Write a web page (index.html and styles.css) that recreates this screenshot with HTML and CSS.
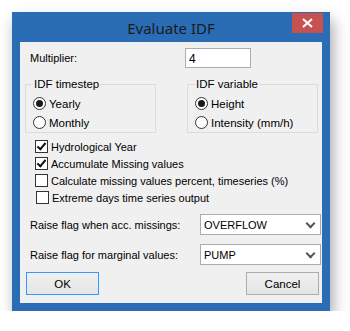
FILE: index.html
```html
<!DOCTYPE html>
<html lang="en">
<head>
    <meta charset="UTF-8">
    <title>Evaluate IDF</title>
    <link rel="stylesheet" href="styles.css">
</head>
<body>
    <div class="window">
        <div class="titlebar">
            <span class="title">Evaluate IDF</span>
            <span class="close">
                <svg width="11" height="10" viewBox="0 0 11 10"><path d="M1 1 L10 9 M10 1 L1 9" stroke="#fff" stroke-width="2"/></svg>
            </span>
        </div>
        <div class="client">
            <div class="row-mult">
                <span class="label-mult">Multiplier:</span>
                <div class="textbox">4</div>
            </div>

            <div class="groups">
                <fieldset class="group">
                    <legend>IDF timestep</legend>
                    <div class="radio-row"><span class="radio on"></span>Yearly</div>
                    <div class="radio-row"><span class="radio"></span>Monthly</div>
                </fieldset>
                <fieldset class="group">
                    <legend>IDF variable</legend>
                    <div class="radio-row"><span class="radio on"></span>Height</div>
                    <div class="radio-row"><span class="radio"></span>Intensity (mm/h)</div>
                </fieldset>
            </div>

            <div class="checks">
                <div class="check-row"><span class="check on"></span>Hydrological Year</div>
                <div class="check-row"><span class="check on"></span>Accumulate Missing values</div>
                <div class="check-row"><span class="check"></span>Calculate missing values percent, timeseries (%)</div>
                <div class="check-row shifted"><span class="check"></span>Extreme days time series output</div>
            </div>

            <div class="combo-row first">
                <span class="combo-label">Raise flag when acc. missings:</span>
                <div class="combo">OVERFLOW<span class="arrow"></span></div>
            </div>
            <div class="combo-row">
                <span class="combo-label">Raise flag for marginal values:</span>
                <div class="combo">PUMP<span class="arrow"></span></div>
            </div>

            <div class="buttons">
                <div class="btn default">OK</div>
                <div class="btn">Cancel</div>
            </div>
        </div>
    </div>
</body>
</html>
```

FILE: styles.css
```css
body {
    margin: 0;
    background: #fff;
    font-family: "Liberation Sans", Arial, sans-serif;
    font-size: 11px;
    color: #000;
}
.window {
    margin: 12px 0 0 12px;
    width: 318px;
    height: 299px;
    box-sizing: border-box;
    background: #2b6db4;
    padding: 0 8px 8px 8px;
    box-shadow: 3px 8px 14px rgba(0, 0, 0, 0.35);
    position: relative;
}
.titlebar {
    height: 30px;
    display: flex;
    align-items: center;
    justify-content: center;
}
.title {
    font-family: "Noto Sans", "Open Sans", sans-serif;
    font-size: 15px;
    color: #1a1a1a;
    margin-top: 1px;
}
.close {
    position: absolute;
    top: 1px;
    right: 7px;
    width: 31px;
    height: 20px;
    background: #c75050;
    display: flex;
    align-items: center;
    justify-content: center;
}
.client {
    background: #f0f0f0;
    height: 261px;
    padding-top: 6px;
    box-sizing: border-box;
}
.row-mult {
    display: flex;
    align-items: center;
    padding-left: 10px;
    height: 20px;
}
.label-mult {
    width: 155px;
}
.textbox {
    width: 66px;
    height: 20px;
    box-sizing: border-box;
    border: 1px solid #abadb3;
    background: #fff;
    padding: 3px 0 0 3px;
    font-size: 12px;
}
.groups {
    display: flex;
    gap: 31px;
    margin: 9px 0 0 5px;
}
.group {
    margin: 0;
    width: 131px;
    height: 56px;
    box-sizing: border-box;
    border: 1px solid #dcdcdc;
    padding: 3px 0 0 7px;
}
.group legend {
    padding: 0 1px;
    margin-left: 0;
    font-size: 11.5px;
    line-height: 14px;
}
.radio-row {
    display: flex;
    align-items: center;
    height: 19px;
    font-size: 11.5px;
}
.radio {
    width: 13px;
    height: 13px;
    box-sizing: border-box;
    border: 1px solid #333;
    border-radius: 50%;
    background: #fff;
    margin-right: 3px;
    display: flex;
    align-items: center;
    justify-content: center;
}
.radio.on::after {
    content: "";
    width: 7px;
    height: 7px;
    border-radius: 50%;
    background: #1a1a1a;
}
.checks {
    margin: 5px 0 0 15px;
}
.check-row {
    display: flex;
    align-items: center;
    height: 17px;
    font-size: 11px;
}
.check-row.shifted {
    padding-left: 1px;
}
.check {
    width: 13px;
    height: 13px;
    box-sizing: border-box;
    border: 1px solid #333;
    background: #fff;
    margin-right: 3px;
    position: relative;
}
.check.on::after {
    content: "";
    position: absolute;
    left: 3px;
    top: 0px;
    width: 3px;
    height: 7px;
    border: solid #111;
    border-width: 0 2px 2px 0;
    transform: rotate(40deg);
}
.combo-row {
    display: flex;
    align-items: center;
    padding-left: 10px;
    margin-top: 9px;
}
.combo-row.first {
    margin-top: 8px;
}
.combo-label {
    width: 170px;
    font-size: 11px;
}
.combo {
    width: 121px;
    height: 21px;
    box-sizing: border-box;
    border: 1px solid #acacac;
    background: #fff;
    padding: 4px 0 0 3px;
    font-size: 11px;
    position: relative;
}
.arrow {
    position: absolute;
    right: 6px;
    top: 5px;
    width: 5px;
    height: 5px;
    border: solid #555;
    border-width: 0 2px 2px 0;
    transform: rotate(45deg);
}
.buttons {
    display: flex;
    justify-content: space-between;
    margin: 7px 3px 0 6px;
}
.btn {
    width: 73px;
    height: 23px;
    box-sizing: border-box;
    border: 1px solid #acacac;
    background: linear-gradient(#f0f0f0, #e5e5e5);
    display: flex;
    align-items: center;
    justify-content: center;
    font-size: 11.5px;
}
.btn.default {
    border-color: #3399ff;
}
```
